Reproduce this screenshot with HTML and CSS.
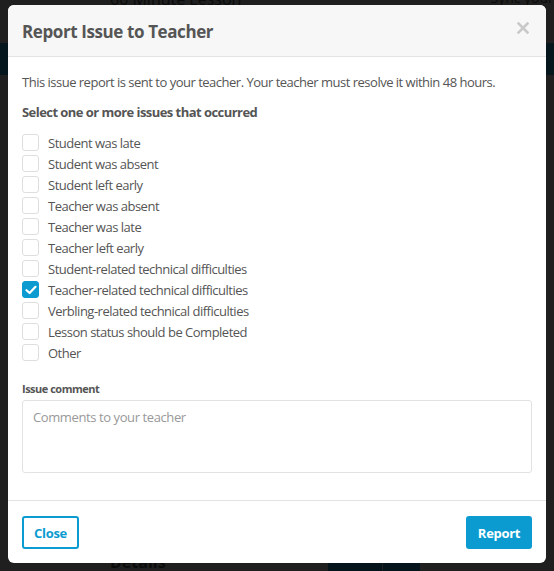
FILE: index.html
```html
<!DOCTYPE html>
<html>
<head>
<meta charset="utf-8">
<title>Report Issue to Teacher</title>
<link rel="stylesheet" href="styles.css">
</head>
<body>
<div class="page">
  <div class="page-top">
    <span class="lesson-name">60 Minute Lesson</span>
    <span class="sync">Sync your calendar</span>
  </div>
  <div class="page-band"></div>
  <div class="page-spacer"></div>
  <div class="page-bottom">
    <span class="details">Details</span>
    <span class="tab tab-a">Msg</span>
    <span class="tab tab-b"></span>
  </div>
</div>

<div class="modal">
  <div class="modal-header">
    <h2 class="modal-title">Report Issue to Teacher</h2>
    <button class="modal-x" aria-label="Close">
      <svg width="12" height="12" viewBox="0 0 12 12"><path d="M1.5 1.5 L10.5 10.5 M10.5 1.5 L1.5 10.5" stroke="#c9c9c9" stroke-width="2.6" stroke-linecap="square"/></svg>
    </button>
  </div>
  <div class="modal-body">
    <p class="intro">This issue report is sent to your teacher. Your teacher must resolve it within 48 hours.</p>
    <p class="question">Select one or more issues that occurred</p>
    <ul class="issues">
      <li><span class="box"></span>Student was late</li>
      <li><span class="box"></span>Student was absent</li>
      <li><span class="box"></span>Student left early</li>
      <li><span class="box"></span>Teacher was absent</li>
      <li><span class="box"></span>Teacher was late</li>
      <li><span class="box"></span>Teacher left early</li>
      <li><span class="box"></span>Student-related technical difficulties</li>
      <li><span class="box checked"><svg width="12" height="10" viewBox="0 0 12 10"><path d="M1.5 5.2 L4.6 8 L10.5 1.8" fill="none" stroke="#fff" stroke-width="2.2" stroke-linecap="round" stroke-linejoin="round"/></svg></span>Teacher-related technical difficulties</li>
      <li><span class="box"></span>Verbling-related technical difficulties</li>
      <li><span class="box"></span>Lesson status should be Completed</li>
      <li><span class="box"></span>Other</li>
    </ul>
    <label class="comment-label">Issue comment</label>
    <div class="comment">Comments to your teacher</div>
  </div>
  <div class="modal-footer">
    <button class="btn btn-outline">Close</button>
    <button class="btn btn-primary">Report</button>
  </div>
</div>
</body>
</html>
```

FILE: styles.css
```css
body {
  margin: 0;
  background: #1f1f1f;
  font-family: 'Open Sans', 'Noto Sans', sans-serif;
  height: 571px;
  overflow: hidden;
}

p, h2, ul {
  margin: 0;
  padding: 0;
}

.page {
  color: #0b0b0b;
  font-size: 16px;
}

.page-top {
  display: flex;
  margin-top: -12px;
  padding-left: 110px;
  height: 55px;
}

.sync {
  margin-left: auto;
  margin-right: -60px;
  font-size: 14px;
}

.page-band {
  height: 32px;
  background: #05171c;
}

.page-spacer {
  height: 476px;
}

.page-bottom {
  display: flex;
  padding-left: 110px;
  height: 30px;
}

.details {
  font-weight: bold;
  width: 218px;
}

.tab {
  background: #04141a;
  height: 30px;
  width: 54px;
}

.tab-b {
  margin-left: 1px;
  width: 37px;
}

.tab-a {
  color: #04141a;
}

.modal {
  position: absolute;
  top: 5px;
  left: 8px;
  width: 538px;
  background: #fff;
  border-radius: 6px;
  overflow: hidden;
}

.modal-header {
  height: 51px;
  background: #f7f7f7;
  border-bottom: 1px solid #e3e3e3;
  display: flex;
  align-items: center;
  padding: 0 14px;
}

.modal-title {
  font-size: 17px;
  font-weight: bold;
  color: #555;
  letter-spacing: -0.4px;
  margin-top: 2px;
}

.modal-x {
  margin-left: auto;
  margin-right: 3px;
  margin-top: -6px;
  border: 0;
  background: none;
  padding: 0;
  display: flex;
}

.modal-body {
  padding: 16px 14px 27px;
  border-bottom: 1px solid #e3e3e3;
  color: #555;
  font-size: 13px;
  line-height: 18px;
}

.intro {
  letter-spacing: -0.5px;
}

.question {
  font-weight: bold;
  margin-top: 12px;
  letter-spacing: -0.55px;
}

.issues {
  list-style: none;
  margin-top: 11px;
}

.issues li {
  display: flex;
  align-items: center;
  height: 21px;
  letter-spacing: -0.5px;
}

.box {
  width: 15px;
  height: 15px;
  border: 1px solid #dedede;
  border-radius: 3px;
  margin-right: 9px;
  display: flex;
  align-items: center;
  justify-content: center;
}

.box.checked {
  background: #0b9bd0;
  border-color: #0b9bd0;
}

.comment-label {
  display: block;
  margin-top: 18px;
  font-size: 11px;
  line-height: 15px;
  font-weight: bold;
  letter-spacing: -0.5px;
}

.comment {
  margin-top: 4px;
  height: 57px;
  border: 1px solid #e2e2e2;
  border-radius: 3px;
  padding: 7px 10px;
  color: #999;
  letter-spacing: -0.4px;
}

.modal-footer {
  display: flex;
  justify-content: space-between;
  align-items: flex-start;
  padding: 15px 14px 14px;
}

.btn {
  height: 33px;
  border-radius: 3px;
  font-family: 'Open Sans', 'Noto Sans', sans-serif;
  font-size: 13px;
  font-weight: bold;
  letter-spacing: -0.3px;
}

.btn-outline {
  width: 57px;
  background: #fff;
  border: 2px solid #0b9bd0;
  color: #0b9bd0;
}

.btn-primary {
  width: 66px;
  background: #0b9bd0;
  border: 0;
  color: #fff;
}
```
